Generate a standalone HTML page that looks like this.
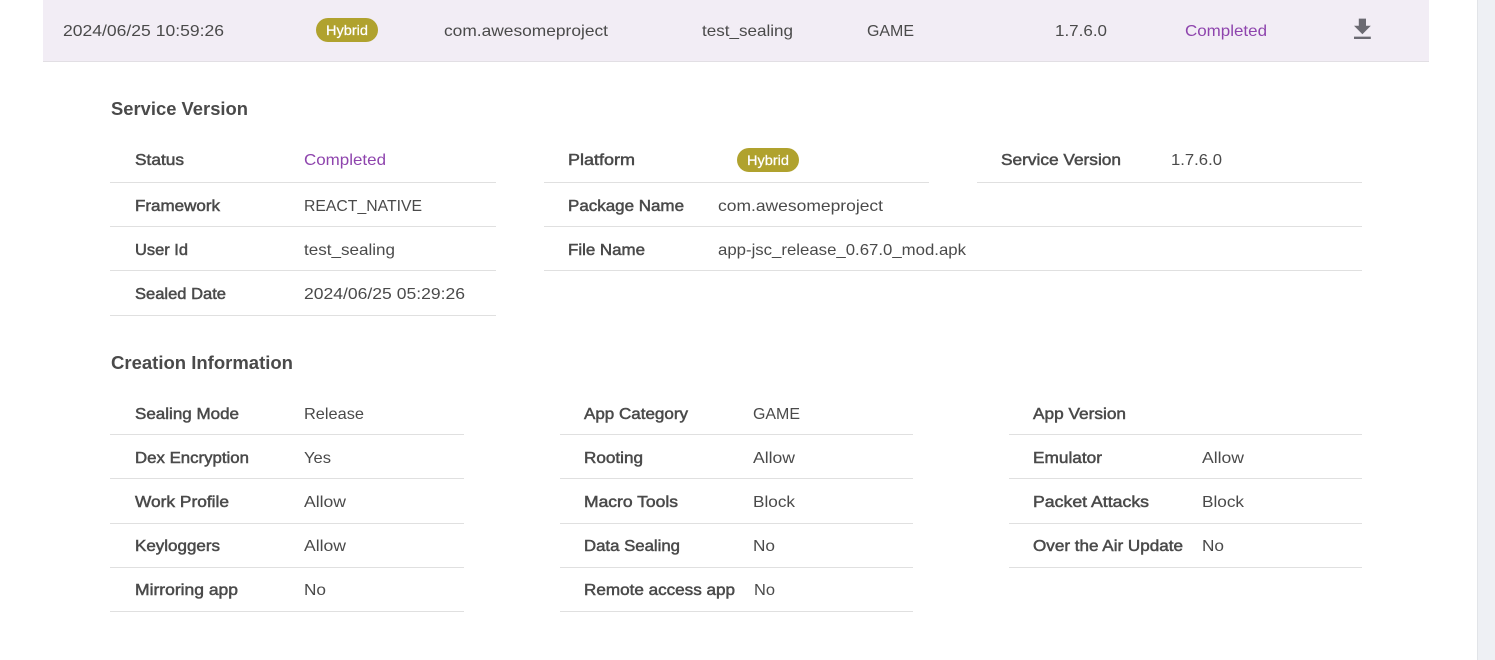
<!DOCTYPE html>
<html lang="en">
<head>
<meta charset="utf-8">
<title>Service Version</title>
<style>
html,body{margin:0;padding:0;width:1495px;height:660px;overflow:hidden;background:#fff}
svg{display:block;position:absolute;left:0;top:0}
text{font-family:"Liberation Sans",Arial,sans-serif;font-size:16px;fill:#4a4a4a}
.l{stroke:#4a4a4a;stroke-width:.5px}
.h{font-size:18px;font-weight:bold;fill:#4a4a4a}
.c{fill:#8e44ad}
.p{font-size:14px;fill:#fff;stroke:#fff;stroke-width:.25px}
.d{fill:#e0e0e0}
</style>
</head>
<body>
<svg width="1495" height="660" viewBox="0 0 1495 660" xmlns="http://www.w3.org/2000/svg">
<rect x="1477" y="0" width="18" height="660" fill="#eef0f4"/>
<rect x="1477" y="0" width="1" height="660" fill="#e2e4e8"/>
<rect x="43" y="0" width="1386" height="61" fill="#f2edf5"/>
<rect x="43" y="61" width="1386" height="1" fill="#e2dfe4"/>

<text x="63" y="36" textLength="161" lengthAdjust="spacingAndGlyphs">2024/06/25 10:59:26</text>
<rect x="316" y="18" width="62" height="24" rx="12" fill="#b0a22e"/>
<text class="p" x="326" y="35" textLength="42" lengthAdjust="spacingAndGlyphs">Hybrid</text>
<text x="444" y="36" textLength="164" lengthAdjust="spacingAndGlyphs">com.awesomeproject</text>
<text x="702" y="36" textLength="91" lengthAdjust="spacingAndGlyphs">test_sealing</text>
<text x="867" y="36" textLength="47" lengthAdjust="spacingAndGlyphs">GAME</text>
<text x="1055" y="36" textLength="52" lengthAdjust="spacingAndGlyphs">1.7.6.0</text>
<text class="c" x="1185" y="36" textLength="82" lengthAdjust="spacingAndGlyphs">Completed</text>
<path transform="translate(1348 15) scale(1.2)" fill="#6b6a72" d="M19 9h-4V3H9v6H5l7 7 7-7zM5 18v2h14v-2H5z"/>

<text class="h" x="111" y="115" textLength="137" lengthAdjust="spacingAndGlyphs">Service Version</text>

<text class="l" x="135" y="165" textLength="49" lengthAdjust="spacingAndGlyphs">Status</text>
<text class="c" x="304" y="165" textLength="82" lengthAdjust="spacingAndGlyphs">Completed</text>
<rect class="d" x="110" y="182" width="386" height="1"/>
<text class="l" x="135" y="211" textLength="85" lengthAdjust="spacingAndGlyphs">Framework</text>
<text x="304" y="211" textLength="118" lengthAdjust="spacingAndGlyphs">REACT_NATIVE</text>
<rect class="d" x="110" y="226" width="386" height="1"/>
<text class="l" x="135" y="255" textLength="53" lengthAdjust="spacingAndGlyphs">User Id</text>
<text x="304" y="255" textLength="91" lengthAdjust="spacingAndGlyphs">test_sealing</text>
<rect class="d" x="110" y="270" width="386" height="1"/>
<text class="l" x="135" y="299" textLength="91" lengthAdjust="spacingAndGlyphs">Sealed Date</text>
<text x="304" y="299" textLength="161" lengthAdjust="spacingAndGlyphs">2024/06/25 05:29:26</text>
<rect class="d" x="110" y="315" width="386" height="1"/>

<text class="l" x="568" y="165" textLength="67" lengthAdjust="spacingAndGlyphs">Platform</text>
<rect x="737" y="148" width="62" height="24" rx="12" fill="#b0a22e"/>
<text class="p" x="747" y="165" textLength="42" lengthAdjust="spacingAndGlyphs">Hybrid</text>
<rect class="d" x="544" y="182" width="385" height="1"/>
<text class="l" x="568" y="211" textLength="116" lengthAdjust="spacingAndGlyphs">Package Name</text>
<text x="718" y="211" textLength="165" lengthAdjust="spacingAndGlyphs">com.awesomeproject</text>
<rect class="d" x="544" y="226" width="818" height="1"/>
<text class="l" x="568" y="255" textLength="77" lengthAdjust="spacingAndGlyphs">File Name</text>
<text x="718" y="255" textLength="248" lengthAdjust="spacingAndGlyphs">app-jsc_release_0.67.0_mod.apk</text>
<rect class="d" x="544" y="270" width="818" height="1"/>

<text class="l" x="1001" y="165" textLength="120" lengthAdjust="spacingAndGlyphs">Service Version</text>
<text x="1171" y="165" textLength="51" lengthAdjust="spacingAndGlyphs">1.7.6.0</text>
<rect class="d" x="977" y="182" width="385" height="1"/>

<text class="h" x="111" y="369" textLength="182" lengthAdjust="spacingAndGlyphs">Creation Information</text>

<text class="l" x="135" y="419" textLength="104" lengthAdjust="spacingAndGlyphs">Sealing Mode</text>
<text x="304" y="419" textLength="60" lengthAdjust="spacingAndGlyphs">Release</text>
<rect class="d" x="110" y="434" width="354" height="1"/>
<text class="l" x="135" y="463" textLength="114" lengthAdjust="spacingAndGlyphs">Dex Encryption</text>
<text x="304" y="463" textLength="27" lengthAdjust="spacingAndGlyphs">Yes</text>
<rect class="d" x="110" y="478" width="354" height="1"/>
<text class="l" x="135" y="507" textLength="94" lengthAdjust="spacingAndGlyphs">Work Profile</text>
<text x="304" y="507" textLength="42" lengthAdjust="spacingAndGlyphs">Allow</text>
<rect class="d" x="110" y="523" width="354" height="1"/>
<text class="l" x="135" y="551" textLength="85" lengthAdjust="spacingAndGlyphs">Keyloggers</text>
<text x="304" y="551" textLength="42" lengthAdjust="spacingAndGlyphs">Allow</text>
<rect class="d" x="110" y="567" width="354" height="1"/>
<text class="l" x="135" y="595" textLength="103" lengthAdjust="spacingAndGlyphs">Mirroring app</text>
<text x="304" y="595" textLength="22" lengthAdjust="spacingAndGlyphs">No</text>
<rect class="d" x="110" y="611" width="354" height="1"/>

<text class="l" x="584" y="419" textLength="104" lengthAdjust="spacingAndGlyphs">App Category</text>
<text x="753" y="419" textLength="47" lengthAdjust="spacingAndGlyphs">GAME</text>
<rect class="d" x="560" y="434" width="353" height="1"/>
<text class="l" x="584" y="463" textLength="59" lengthAdjust="spacingAndGlyphs">Rooting</text>
<text x="753" y="463" textLength="42" lengthAdjust="spacingAndGlyphs">Allow</text>
<rect class="d" x="560" y="478" width="353" height="1"/>
<text class="l" x="584" y="507" textLength="94" lengthAdjust="spacingAndGlyphs">Macro Tools</text>
<text x="753" y="507" textLength="42" lengthAdjust="spacingAndGlyphs">Block</text>
<rect class="d" x="560" y="523" width="353" height="1"/>
<text class="l" x="584" y="551" textLength="96" lengthAdjust="spacingAndGlyphs">Data Sealing</text>
<text x="753" y="551" textLength="22" lengthAdjust="spacingAndGlyphs">No</text>
<rect class="d" x="560" y="567" width="353" height="1"/>
<text class="l" x="584" y="595" textLength="151" lengthAdjust="spacingAndGlyphs">Remote access app</text>
<text x="754" y="595" textLength="21" lengthAdjust="spacingAndGlyphs">No</text>
<rect class="d" x="560" y="611" width="353" height="1"/>

<text class="l" x="1033" y="419" textLength="93" lengthAdjust="spacingAndGlyphs">App Version</text>
<rect class="d" x="1009" y="434" width="353" height="1"/>
<text class="l" x="1033" y="463" textLength="69" lengthAdjust="spacingAndGlyphs">Emulator</text>
<text x="1202" y="463" textLength="42" lengthAdjust="spacingAndGlyphs">Allow</text>
<rect class="d" x="1009" y="478" width="353" height="1"/>
<text class="l" x="1033" y="507" textLength="116" lengthAdjust="spacingAndGlyphs">Packet Attacks</text>
<text x="1202" y="507" textLength="42" lengthAdjust="spacingAndGlyphs">Block</text>
<rect class="d" x="1009" y="523" width="353" height="1"/>
<text class="l" x="1033" y="551" textLength="150" lengthAdjust="spacingAndGlyphs">Over the Air Update</text>
<text x="1202" y="551" textLength="22" lengthAdjust="spacingAndGlyphs">No</text>
<rect class="d" x="1009" y="567" width="353" height="1"/>
</svg>
</body>
</html>
